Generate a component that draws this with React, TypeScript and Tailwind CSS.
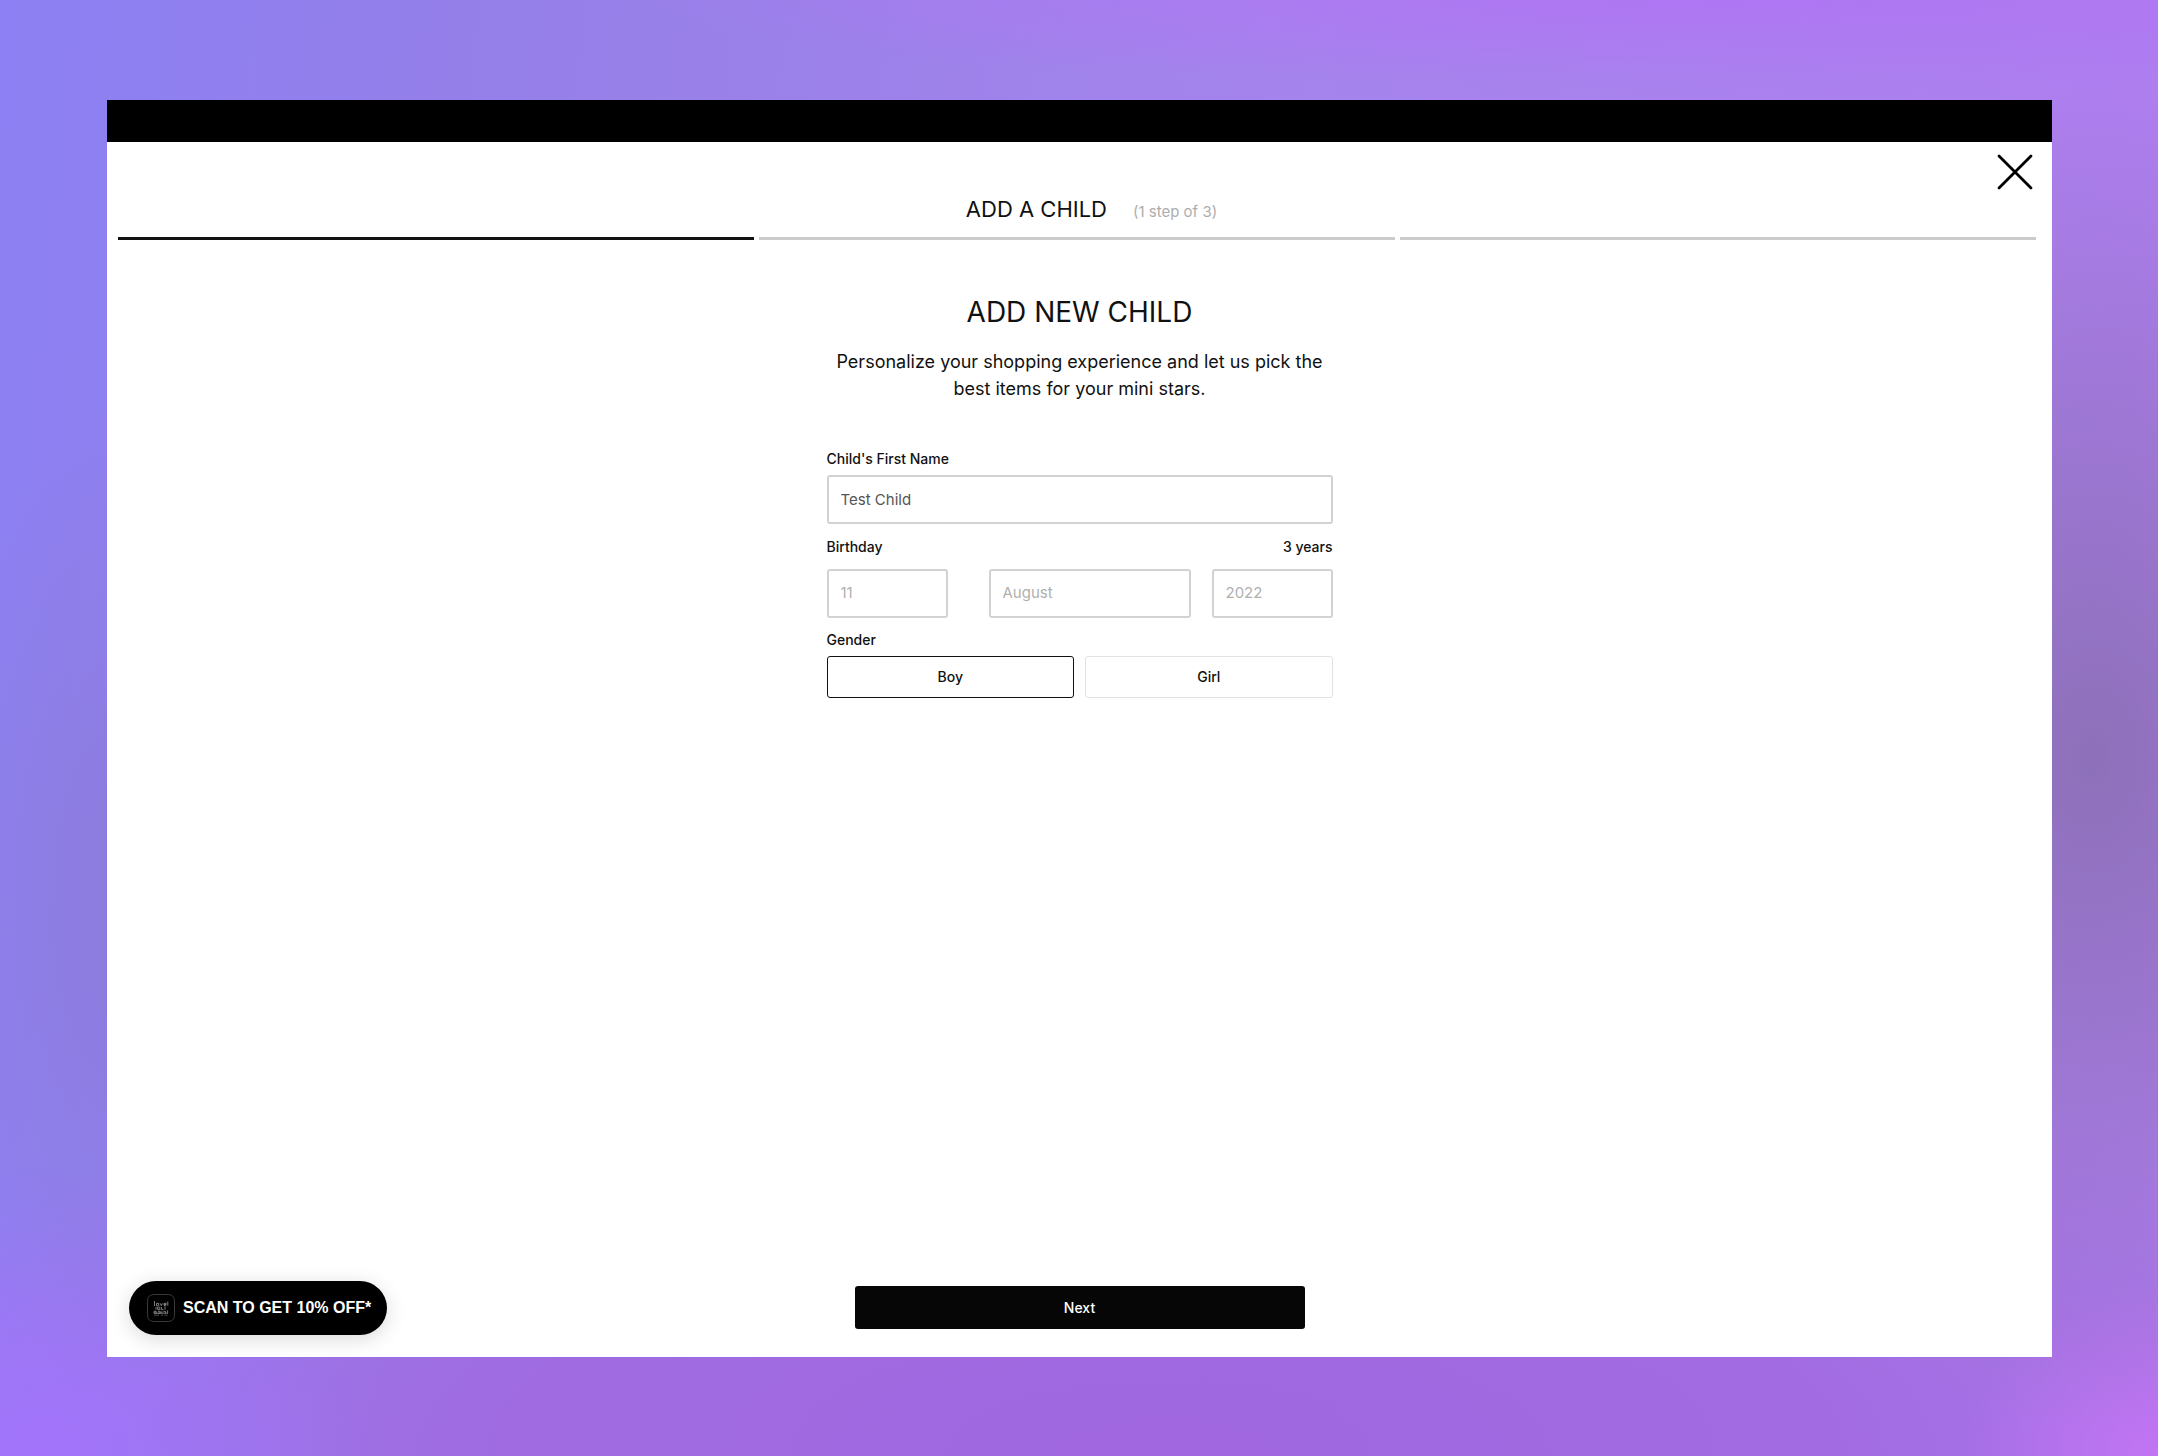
import React, { useState } from 'react';

type Gender = 'boy' | 'girl';

const STEPS = [1, 2, 3];
const CURRENT_STEP = 1;

const GENDERS: { value: Gender; label: string }[] = [
  { value: 'boy', label: 'Boy' },
  { value: 'girl', label: 'Girl' },
];

const fieldClass =
  'h-[49px] w-full appearance-none rounded-[3px] border-2 border-[#d0d2d4] bg-white px-3 text-[15px] outline-none';

const CloseIcon: React.FC = () => (
  <svg width="36" height="36" viewBox="0 0 36 36" fill="none" stroke="#000" strokeWidth="2.8" strokeLinecap="round">
    <path d="M2 2L34 34M34 2L2 34" />
  </svg>
);

// Small app tile with the three-line wordmark
const TileIcon: React.FC = () => (
  <svg width="28" height="28" viewBox="0 0 28 28" fill="none">
    <rect x="0.5" y="0.5" width="27" height="27" rx="6" stroke="#3a3a3a" />
    <g stroke="#8a8a8a" strokeWidth="0.9">
      <path d="M7.5 7v5M9.5 9.3h2.2v2.4H9.5zM13.2 9.3l1.1 2.4l1.1-2.4M17 10.5h2.2V9.3H17v2.4h2.2M20.8 7.5v4.2" />
      <path d="M9 12.8v2.8M10.6 13.2h2.2v2.4h-2.2zM14.4 13v2.6h2M18 12.6v3" />
      <path d="M7 17.3h2.2v1.9H7zM11 17.3h2.2v1.9H11M14.8 17.3v1.9M16.4 17.3h2v1.9M20.6 16.4v2.8M7 19.2h14" />
      <path d="M7 21.2h5M14 21.2h2M17.5 21.2h3" stroke="#555" />
    </g>
  </svg>
);

const App: React.FC = () => {
  const [name, setName] = useState('Test Child');
  const [gender, setGender] = useState<Gender>('boy');

  return (
    <div className="relative flex min-h-screen flex-col bg-[radial-gradient(ellipse_20%_46%_at_97%_52%,#8d70b9_0%,#8d70b900_100%),radial-gradient(ellipse_10%_34%_at_6%_62%,#8c7cdc_0%,#8c7cdc00_100%),radial-gradient(ellipse_16%_20%_at_2%_100%,#a374fb_0%,#a374fb00_100%),radial-gradient(ellipse_9%_12%_at_100%_100%,#c274f2_0%,#c274f200_100%),radial-gradient(ellipse_62%_32%_at_54%_100%,#a067e0_0%,#a169e0e6_50%,#a169e000_100%),radial-gradient(ellipse_50%_6%_at_80%_0%,#af76f3_0%,#af76f300_100%),linear-gradient(96deg,#8c80f4_0%,#957fe8_22%,#a484ec_55%,#b07df0_100%)] pt-[100px] pr-[106px] pb-[99px] pl-[107px] font-[Inter,'Liberation_Sans',sans-serif] text-[#111]">
      <main className="relative flex flex-1 flex-col bg-white">
        <div className="h-[42px] bg-black" />

        <button type="button" aria-label="Close" className="absolute top-[54px] right-[19px]">
          <CloseIcon />
        </button>

        <header className="pr-4 pl-[11px]">
          <div className="flex items-baseline justify-center gap-[26px] pt-[51px] pb-[12px] pl-[29px]">
            <h1 className="text-[22px] leading-8">ADD A CHILD</h1>
            <span className="text-[15px] text-[#adadad]">(1 step of 3)</span>
          </div>
          <div className="flex gap-[5px]">
            {STEPS.map((step) => (
              <div key={step} className={`h-[3px] flex-1 ${step <= CURRENT_STEP ? 'bg-[#111]' : 'bg-[#cbcbcb]'}`} />
            ))}
          </div>
        </header>

        <form className="flex flex-1 flex-col items-center" onSubmit={(e) => e.preventDefault()}>
          <div className="w-full max-w-[506px] pt-[54px]">
            <h2 className="text-center text-[28px] leading-9">ADD NEW CHILD</h2>
            <p className="pt-[18px] text-center text-lg leading-[27px]">
              Personalize your shopping experience and let us pick the best items for your mini stars.
            </p>

            <label htmlFor="name" className="block pt-[45px] text-sm leading-6 font-medium">
              Child's First Name
            </label>
            <input
              id="name"
              value={name}
              onChange={(e) => setName(e.target.value)}
              className={`${fieldClass} mt-1 text-[#555]`}
            />

            <div className="flex justify-between pt-[11px] text-sm leading-6 font-medium">
              <span id="birthday">Birthday</span>
              <span>3 years</span>
            </div>
            <div role="group" aria-labelledby="birthday" className="flex justify-between pt-[10px]">
              <div className="w-[121px]">
                <select aria-label="Day" className={`${fieldClass} text-[#b0b0b0]`}>
                  <option>11</option>
                </select>
              </div>
              <div className="ml-5 w-[202px]">
                <select aria-label="Month" className={`${fieldClass} text-[#b0b0b0]`}>
                  <option>August</option>
                </select>
              </div>
              <div className="w-[121px]">
                <select aria-label="Year" className={`${fieldClass} text-[#b0b0b0]`}>
                  <option>2022</option>
                </select>
              </div>
            </div>

            <p id="gender" className="pt-[10px] text-sm leading-6 font-medium">
              Gender
            </p>
            <div role="group" aria-labelledby="gender" className="flex gap-[11px] pt-1">
              {GENDERS.map((g) => (
                <button
                  key={g.value}
                  type="button"
                  aria-pressed={gender === g.value}
                  onClick={() => setGender(g.value)}
                  className={`h-[42px] flex-1 rounded-[3px] border text-sm font-medium ${
                    gender === g.value ? 'border-[#111]' : 'border-[#e2e2e2]'
                  }`}
                >
                  {g.label}
                </button>
              ))}
            </div>
          </div>

          <div className="mt-auto mb-7 w-full max-w-[450px]">
            <button type="submit" className="h-[43px] w-full rounded-[3px] bg-[#060606] text-sm font-medium text-white">
              Next
            </button>
          </div>
        </form>

        <button
          type="button"
          className="absolute bottom-[22px] left-[22px] flex h-[54px] items-center gap-2 rounded-full bg-black pr-4 pl-[18px] font-['Liberation_Sans',sans-serif] text-base font-bold text-white shadow-[0_4px_20px_rgba(0,0,0,0.15)]"
        >
          <TileIcon />
          SCAN TO GET 10% OFF*
        </button>
      </main>
    </div>
  );
};

export default App;
